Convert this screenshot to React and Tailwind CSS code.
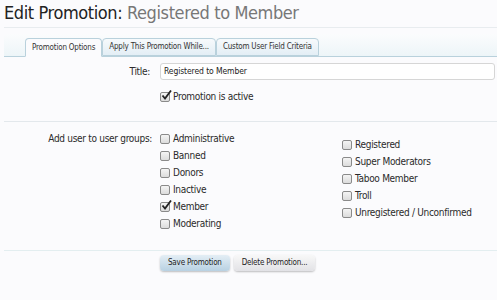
import React from 'react'

const font = { fontFamily: '"DejaVu Sans Condensed", "DejaVu Sans", sans-serif' }

const Check = ({ checked, label }) => (
  <div className="flex items-center h-[17px] text-[10px] tracking-[-0.3px] text-[#2a2a2a]">
    <span className="relative w-[10px] h-[10px] mr-[3px] rounded-[2px] border border-[#8a8a8a] bg-gradient-to-b from-[#f4f4f4] to-[#dcdcdc] shrink-0">
      {checked && (
        <svg className="absolute -top-[3px] left-0" width="11" height="11" viewBox="0 0 11 11">
          <path d="M1.5 5.5 L4 8.5 L10 0.5" fill="none" stroke="#222" strokeWidth="1.8" />
        </svg>
      )}
    </span>
    <span>{label}</span>
  </div>
)

const Tab = ({ label, active }) => (
  <div
    className={
      active
        ? 'h-[19px] px-[6px] flex items-center text-[8px] tracking-[-0.2px] text-[#333] bg-[#fbfbfd] border border-[#b9d1dc] border-b-[#fbfbfd] rounded-t-[4px] -mb-px'
        : 'h-[18px] px-[6px] flex items-center text-[8px] tracking-[-0.2px] text-[#333] bg-gradient-to-b from-[#f7fafc] to-[#e3eef5] border border-[#b9d1dc] rounded-t-[4px]'
    }
  >
    {label}
  </div>
)

const Button = ({ label, primary }) => (
  <button
    className={
      primary
        ? 'h-[16px] px-[8px] text-[8px] tracking-[-0.2px] text-[#222] rounded-[4px] bg-gradient-to-b from-[#e4eef5] to-[#b8d1e2] shadow-[0_1px_2px_rgba(0,0,0,0.25)]'
        : 'h-[16px] px-[8px] text-[8px] tracking-[-0.2px] text-[#222] rounded-[4px] bg-gradient-to-b from-[#f8f8f8] to-[#e2e2e6] shadow-[0_1px_2px_rgba(0,0,0,0.25)]'
    }
  >
    {label}
  </button>
)

export default function App() {
  const left = ['Administrative', 'Banned', 'Donors', 'Inactive', 'Member', 'Moderating']
  const right = ['Registered', 'Super Moderators', 'Taboo Member', 'Troll', 'Unregistered / Unconfirmed']

  return (
    <div className="min-h-screen bg-[#fbfbfd] pl-[4px]" style={font}>
      <h1 className="h-[28px] pt-[2px] text-[18px] tracking-[-0.4px] leading-[22px] border-b border-[#e8ecef]">
        <span className="text-[#222]">Edit Promotion: </span>
        <span className="text-[#777]">Registered to Member</span>
      </h1>

      {/* tabs */}
      <div className="mt-[6px] h-[23px] flex items-end pl-[21px] bg-gradient-to-b from-[#fbfcfd] to-[#edf5f8] border-b border-[#b9d1dc] rounded-tl-[4px]">
        <Tab label="Promotion Options" active />
        <Tab label="Apply This Promotion While..." />
        <Tab label="Custom User Field Criteria" />
      </div>

      {/* title */}
      <div className="flex mt-[6px]">
        <div className="w-[154px] pr-[8px] text-right text-[10px] tracking-[-0.3px] text-[#2a2a2a] leading-[17px]">Title:</div>
        <div className="flex-1 pr-[2px] ml-[2px]">
          <div className="h-[17px] border border-[#d6d6d6] rounded-[3px] bg-white px-[3px] text-[8.5px] tracking-[-0.1px] leading-[15px] text-[#222]">
            Registered to Member
          </div>
        </div>
      </div>
      <div className="flex mt-[8px]">
        <div className="w-[156px]" />
        <Check checked label="Promotion is active" />
      </div>

      <div className="mt-[16px] border-b border-[#e3e8ec]" />

      {/* groups */}
      <div className="flex mt-[8px]">
        <div className="w-[156px] pr-[8px] text-right text-[10px] tracking-[-0.3px] text-[#2a2a2a] leading-[17px]">Add user to user groups:</div>
        <div className="w-[182px]">
          {left.map((g) => (
            <Check key={g} label={g} checked={g === 'Member'} />
          ))}
        </div>
        <div className="mt-[6px]">
          {right.map((g) => (
            <Check key={g} label={g} />
          ))}
        </div>
      </div>

      <div className="mt-[18px] border-b border-[#e3eef0]" />

      <div className="flex gap-[4px] pl-[156px] mt-[4px]">
        <Button label="Save Promotion" primary />
        <Button label="Delete Promotion..." />
      </div>
    </div>
  )
}
